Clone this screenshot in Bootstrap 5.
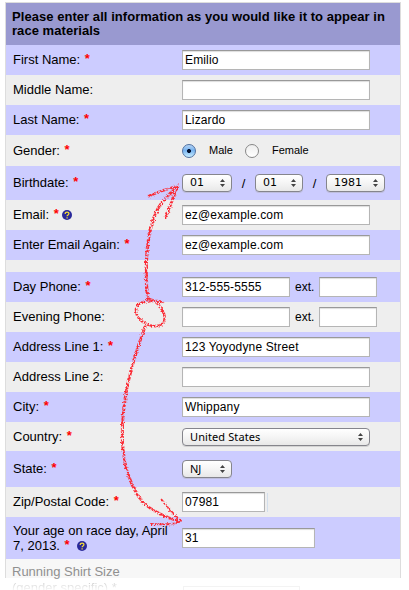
<!DOCTYPE html>
<html lang="en">
<head>
<meta charset="utf-8">
<meta name="viewport" content="width=device-width, initial-scale=1">
<title>Race registration</title>
<link href="https://cdn.jsdelivr.net/npm/bootstrap@5.3.0/dist/css/bootstrap.min.css" rel="stylesheet">
<style>
body{width:409px;height:590px;overflow:hidden;background:#fff;color:#000;font:13px/15px "Liberation Sans",Arial,sans-serif}
.reg{width:396px;margin:2px 0 0 5px;height:576px;border:1px solid #ddd;border-bottom:0}
.reg-head{height:42px;background:#9999d0;padding:7px 0 0 6px;font-weight:700;line-height:14px;letter-spacing:.05px;white-space:nowrap}
.fr{height:30px;background:#eee;padding-left:7px}
.fr.alt{background:#ccf}
.fl{width:169px;white-space:nowrap;padding-bottom:1px}
.req{color:red;margin-left:1px;font-weight:700;position:relative;top:-1px}
.h12{height:12px}.h29{height:29px}.h31{height:31px}.h34{height:34px}.h36{height:36px}.h42{height:42px}
.reg .tf{width:188px;height:20px;min-height:0;border:1px solid #b5b5b5;border-top:1px solid #999;box-shadow:inset 0 1px 1px #ddd;border-radius:0;padding:0 2px;font-size:12px;line-height:18px;color:#000;letter-spacing:.15px;background:#fff}
.reg .w-ph{width:108px}.reg .w-ext{width:58px}.reg .w-zip{width:83px}.reg .w-age{width:133px}
.ext{width:29px;padding-left:5px;font-size:12px}
.zip-end{width:1px;height:19px;margin-left:2px;background:#d3dfec}
.pop{height:18px;border:1px solid #85858c;border-radius:4px;background:linear-gradient(#fff,#f6f6f6 45%,#e8e8e8);box-shadow:0 1px 0 #aaa6;padding:0 6px 0 7px;font:11px/16px "DejaVu Sans",sans-serif}
.pop svg{width:5px;height:8px}
.pop-day{width:50px}.pop-d2{width:48px}.pop-yr{width:59px}.pop-co{width:188px;font-family:"Noto Sans",sans-serif;letter-spacing:.1px}
.pop-st{font-family:"Noto Sans",sans-serif}
.sl{width:23px}
.rb{width:14px;height:14px;border:1px solid #888;border-radius:50%;background:linear-gradient(#eee,#fff)}
.rb.on{border-color:#5070a0;background:radial-gradient(circle at 50% 50%,#001030 0 1.7px,transparent 2.3px),linear-gradient(#b5d4f5,#76b2ef 45%,#c8edff)}
.rl{font-size:11px}
.rl-m{width:49px;padding-left:13px}.rl-f{padding-left:13px}
.hq{width:10px;height:10px;vertical-align:-1px}
.fade-row{height:19px;background:#f7f7f7;color:#909090;padding:5px 0 0 6px;line-height:15px}
.fade-next{height:12px;padding:2px 0 0 12px;line-height:15px;color:transparent;background:linear-gradient(#c4c4c4 2px,#f4f4f4 11px);-webkit-background-clip:text;background-clip:text;white-space:nowrap}
.ghost-tf{width:117px;height:8px;margin:6px 0 0;border:1px solid #f3f3f3;border-bottom:0}
.fade-next>span{width:171px}
.marks{left:0;top:0;width:409px;height:590px;pointer-events:none}
</style>
</head>
<body class="position-relative">
<svg width="0" height="0" class="position-absolute">
<symbol id="ud" viewBox="0 0 5 8"><path d="M2.5 0 5 3H0zM2.5 8 0 5h5z" fill="#444"/></symbol>
<symbol id="help" viewBox="0 0 10 10"><circle cx="5" cy="5" r="5" fill="#29299b"/><path d="M3.2 3.9C3.2 1.4 7 1.6 6.9 3.8 6.8 5 5.2 4.9 5.1 6.2M5.1 7.2v1.3" fill="none" stroke="#f5dc35" stroke-width="1.3"/></symbol>
</svg>
<form class="reg">
<div class="reg-head">Please enter all information as you would like it to appear in<br>race materials</div>
<div class="fr alt d-flex align-items-center"><label class="fl">First Name: <span class="req">*</span></label><input class="form-control tf" value="Emilio"></div>
<div class="fr d-flex align-items-center"><label class="fl">Middle Name:</label><input class="form-control tf"></div>
<div class="fr alt d-flex align-items-center"><label class="fl">Last Name: <span class="req">*</span></label><input class="form-control tf" value="Lizardo"></div>
<div class="fr h31 d-flex align-items-center"><label class="fl">Gender: <span class="req">*</span></label><span class="rb on"></span><span class="rl rl-m">Male</span><span class="rb"></span><span class="rl rl-f">Female</span></div>
<div class="fr alt h34 d-flex align-items-center"><label class="fl">Birthdate: <span class="req">*</span></label>
<div class="pop pop-day d-flex align-items-center justify-content-between">01<svg><use href="#ud"/></svg></div><span class="sl text-center">/</span>
<div class="pop pop-d2 d-flex align-items-center justify-content-between">01<svg><use href="#ud"/></svg></div><span class="sl text-center">/</span>
<div class="pop pop-yr d-flex align-items-center justify-content-between">1981<svg><use href="#ud"/></svg></div></div>
<div class="fr d-flex align-items-center"><label class="fl">Email: <span class="req">*</span> <svg class="hq"><use href="#help"/></svg></label><input class="form-control tf" value="ez@example.com"></div>
<div class="fr alt d-flex align-items-center"><label class="fl">Enter Email Again: <span class="req">*</span></label><input class="form-control tf" value="ez@example.com"></div>
<div class="fr h12"></div>
<div class="fr alt d-flex align-items-center"><label class="fl">Day Phone: <span class="req">*</span></label><input class="form-control tf w-ph" value="312-555-5555"><span class="ext">ext.</span><input class="form-control tf w-ext"></div>
<div class="fr d-flex align-items-center"><label class="fl">Evening Phone:</label><input class="form-control tf w-ph"><span class="ext">ext.</span><input class="form-control tf w-ext"></div>
<div class="fr alt d-flex align-items-center"><label class="fl">Address Line 1: <span class="req">*</span></label><input class="form-control tf" value="123 Yoyodyne Street"></div>
<div class="fr d-flex align-items-center"><label class="fl">Address Line 2:</label><input class="form-control tf"></div>
<div class="fr alt d-flex align-items-center"><label class="fl">City: <span class="req">*</span></label><input class="form-control tf" value="Whippany"></div>
<div class="fr h29 d-flex align-items-center"><label class="fl">Country: <span class="req">*</span></label><div class="pop pop-co d-flex align-items-center justify-content-between">United States<svg><use href="#ud"/></svg></div></div>
<div class="fr alt h36 d-flex align-items-center"><label class="fl">State: <span class="req">*</span></label><div class="pop pop-day pop-st d-flex align-items-center justify-content-between">NJ<svg><use href="#ud"/></svg></div></div>
<div class="fr d-flex align-items-center"><label class="fl">Zip/Postal Code: <span class="req">*</span></label><input class="form-control tf w-zip" value="07981"><span class="zip-end"></span></div>
<div class="fr alt h42 d-flex align-items-center"><label class="fl">Your age on race day, April<br>7, 2013. <span class="req">*</span> &nbsp;<svg class="hq"><use href="#help"/></svg></label><input class="form-control tf w-age" value="31"></div>
<div class="fade-row">Running Shirt Size</div>
</form>
<div class="fade-next d-flex"><span>(gender specific) *</span><div class="ghost-tf"></div></div>
<svg class="marks position-absolute" viewBox="0 0 409 590">
<defs><filter id="crayon" filterUnits="userSpaceOnUse" x="0" y="0" width="409" height="590">
<feTurbulence type="fractalNoise" baseFrequency=".55" numOctaves="2" seed="4" result="n"/>
<feDisplacementMap in="SourceGraphic" in2="n" scale="3" xChannelSelector="R" yChannelSelector="G" result="d"/>
<feColorMatrix in="n" type="matrix" values="0 0 0 0 0  0 0 0 0 0  0 0 0 0 0  0 0 5 0 -1.7" result="m"/>
<feComposite in="d" in2="m" operator="in"/></filter></defs>
<g filter="url(#crayon)" fill="none" stroke="#fb2c36" stroke-width="3.2" stroke-linecap="round" stroke-linejoin="round">
<path d="M148 301C145 277 146 255 149 236C153 214 161 199 177 188"/>
<path d="M149 196C158 192 167 189 178 186C173 197 170 207 166 217" stroke-width="2.8"/>
<path d="M163 302C152 300 138 300 136 309C135 318 146 327 157 326C167 325 166 315 161 308C158 303 154 300 149 299" stroke-width="2.6"/>
<path d="M145 327C136 351 127 380 124 407C119 447 124 475 139 497C149 511 164 517 179 521" stroke-width="3"/>
<path d="M161 499C168 508 174 515 181 521C172 526 161 524 151 524" stroke-width="2"/>
</g></svg>
<script src="https://cdn.jsdelivr.net/npm/bootstrap@5.3.0/dist/js/bootstrap.bundle.min.js"></script>
</body>
</html>
